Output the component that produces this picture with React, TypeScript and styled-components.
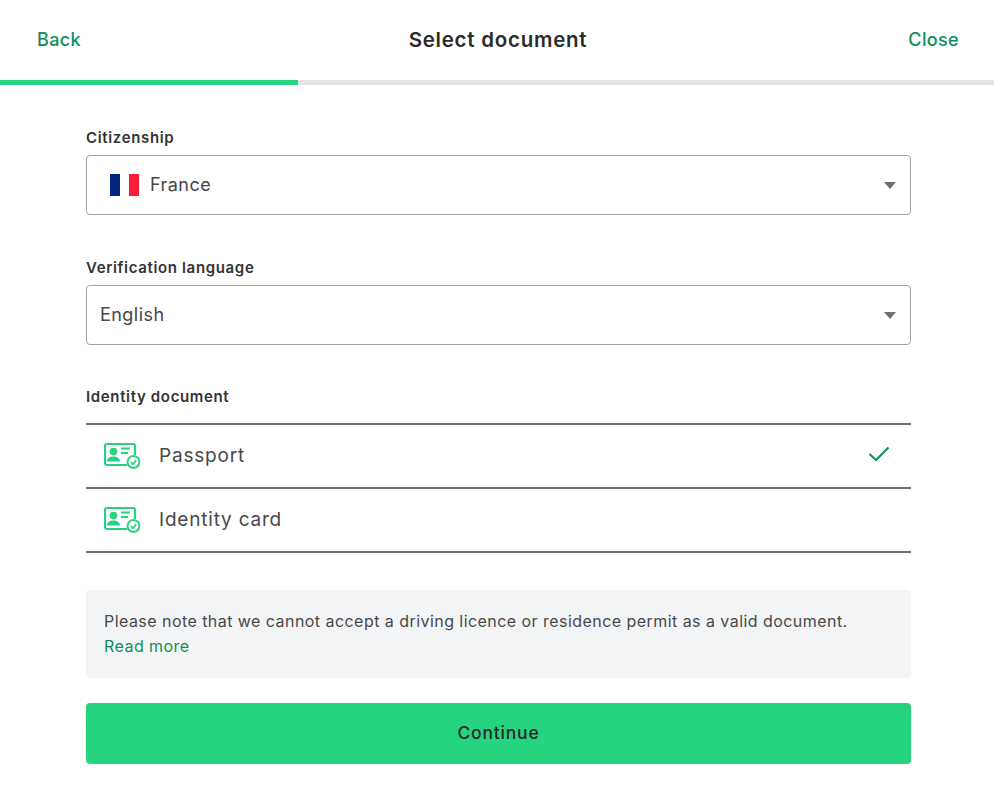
import * as React from "react";
import styled, { createGlobalStyle } from "styled-components";

const green = "#26d37f";
const linkGreen = "#0e8f5a";

const GlobalStyle = createGlobalStyle`
  html, body {
    margin: 0;
    padding: 0;
    background: #fff;
    font-family: "Inter", "Open Sans", sans-serif;
  }
`;

const Page = styled.div`
  width: 994px;
  height: 799px;
  overflow: hidden;
  background: #fff;
`;

const Header = styled.header`
  height: 80px;
  padding: 0 35px 0 37px;
  display: grid;
  grid-template-columns: 1fr auto 1fr;
  align-items: center;
`;

const HeaderLink = styled.a<{ $end?: boolean }>`
  color: ${linkGreen};
  font-size: 18px;
  font-weight: 500;
  letter-spacing: 0.35px;
  padding-bottom: 2px;
  text-align: ${(p) => (p.$end ? "right" : "left")};
`;

const Title = styled.h1`
  margin: 0;
  color: #2b2b2b;
  font-size: 20.5px;
  font-weight: 600;
  letter-spacing: 0.75px;
  padding-bottom: 1px;
`;

const Progress = styled.div`
  height: 5px;
  background: #e4e4e4;
`;

const ProgressFill = styled.div`
  height: 100%;
  background: ${green};
`;

const Main = styled.main`
  width: 825px;
  margin-left: 86px;
  padding-top: 43px;
`;

const Field = styled.div<{ $gap: number }>`
  margin-bottom: ${(p) => p.$gap}px;
`;

const Label = styled.div<{ $gap: number }>`
  height: 19px;
  line-height: 19px;
  margin-bottom: ${(p) => p.$gap}px;
  color: #333;
  font-size: 15px;
  font-weight: 600;
  letter-spacing: 0.65px;
`;

const SelectBox = styled.div<{ $inset: number }>`
  box-sizing: border-box;
  height: 60px;
  padding: 0 14px 0 ${(p) => p.$inset}px;
  display: flex;
  align-items: center;
  border: 1px solid #a3a3a3;
  border-radius: 4px;
  color: #464646;
  font-size: 18px;
  letter-spacing: 0.45px;
`;

const SelectValue = styled.span`
  flex: 1;
  padding-bottom: 2px;
`;

const Flag = styled.span`
  width: 29px;
  height: 22px;
  margin-right: 11px;
  display: flex;
`;

const FlagStripe = styled.span<{ $color: string }>`
  flex: 1;
  background: ${(p) => p.$color};
`;

const Caret = styled.span`
  width: 0;
  height: 0;
  border-left: 6.5px solid transparent;
  border-right: 6.5px solid transparent;
  border-top: 7px solid #6f6f6f;
`;

const DocList = styled.div`
  border-top: 2px solid #6f6f6f;
  margin-bottom: 37px;
`;

const DocRow = styled.div`
  box-sizing: border-box;
  height: 64px;
  padding: 0 21px 0 18px;
  display: flex;
  align-items: center;
  border-bottom: 2px solid #6f6f6f;
  color: #484848;
  font-size: 19px;
  letter-spacing: 0.8px;
`;

const DocName = styled.span`
  flex: 1;
  margin-left: 18px;
  padding-bottom: 2px;
`;

const CheckMark = styled.svg`
  width: 22px;
  height: 16px;
  margin-bottom: 5px;
`;

const Note = styled.div`
  box-sizing: border-box;
  height: 88px;
  padding: 19px 18px 0;
  margin-bottom: 25px;
  background: #f3f4f6;
  border-radius: 4px;
  color: #494949;
  font-size: 16px;
  line-height: 25px;
  letter-spacing: 0.45px;
`;

const ReadMore = styled.a`
  display: block;
  color: ${linkGreen};
`;

const ContinueButton = styled.button`
  width: 100%;
  height: 61px;
  display: block;
  border: 0;
  border-radius: 4px;
  background: ${green};
  color: #2a2a2a;
  font-family: inherit;
  font-size: 17.5px;
  font-weight: 500;
  letter-spacing: 0.8px;
  padding-bottom: 3px;
`;

function CardIcon() {
  return (
    <svg width="37" height="26" viewBox="0 0 37 26" fill="none">
      <path
        d="M23 22H3a2 2 0 0 1-2-2V3a2 2 0 0 1 2-2h26a2 2 0 0 1 2 2v9"
        stroke={green}
        strokeWidth="2.2"
      />
      <circle cx="9.5" cy="8.5" r="3.8" fill={green} />
      <path d="M3 18.5c0-3.4 2.8-5 6.5-5s6.5 1.6 6.5 5z" fill={green} />
      <path d="M17 5.5h9M17 10h7" stroke={green} strokeWidth="1.8" />
      <circle cx="29.5" cy="19" r="5.9" fill="#fff" stroke={green} strokeWidth="2" />
      <path d="M26.8 19l2 2 3.4-3.6" stroke={green} strokeWidth="1.7" />
    </svg>
  );
}

function CheckIcon() {
  return (
    <CheckMark viewBox="0 0 22 16" fill="none">
      <path d="M1.5 8l6.5 6L20.5 1.5" stroke={linkGreen} strokeWidth="2" />
    </CheckMark>
  );
}

export default function App() {
  return (
    <Page>
      <GlobalStyle />
      <Header>
        <HeaderLink>Back</HeaderLink>
        <Title>Select document</Title>
        <HeaderLink $end>Close</HeaderLink>
      </Header>
      <Progress>
        <ProgressFill style={{ width: `${(298 / 994) * 100}%` }} />
      </Progress>
      <Main>
        <Field $gap={43}>
          <Label $gap={8}>Citizenship</Label>
          <SelectBox $inset={23}>
            <Flag>
              <FlagStripe $color="#002780" />
              <FlagStripe $color="#fff" />
              <FlagStripe $color="#f81e38" />
            </Flag>
            <SelectValue>France</SelectValue>
            <Caret />
          </SelectBox>
        </Field>
        <Field $gap={42}>
          <Label $gap={8}>Verification language</Label>
          <SelectBox $inset={13}>
            <SelectValue>English</SelectValue>
            <Caret />
          </SelectBox>
        </Field>
        <Label $gap={17}>Identity document</Label>
        <DocList>
          <DocRow>
            <CardIcon />
            <DocName>Passport</DocName>
            <CheckIcon />
          </DocRow>
          <DocRow>
            <CardIcon />
            <DocName>Identity card</DocName>
          </DocRow>
        </DocList>
        <Note>
          Please note that we cannot accept a driving licence or residence permit as a valid document.
          <ReadMore>Read more</ReadMore>
        </Note>
        <ContinueButton>Continue</ContinueButton>
      </Main>
    </Page>
  );
}
